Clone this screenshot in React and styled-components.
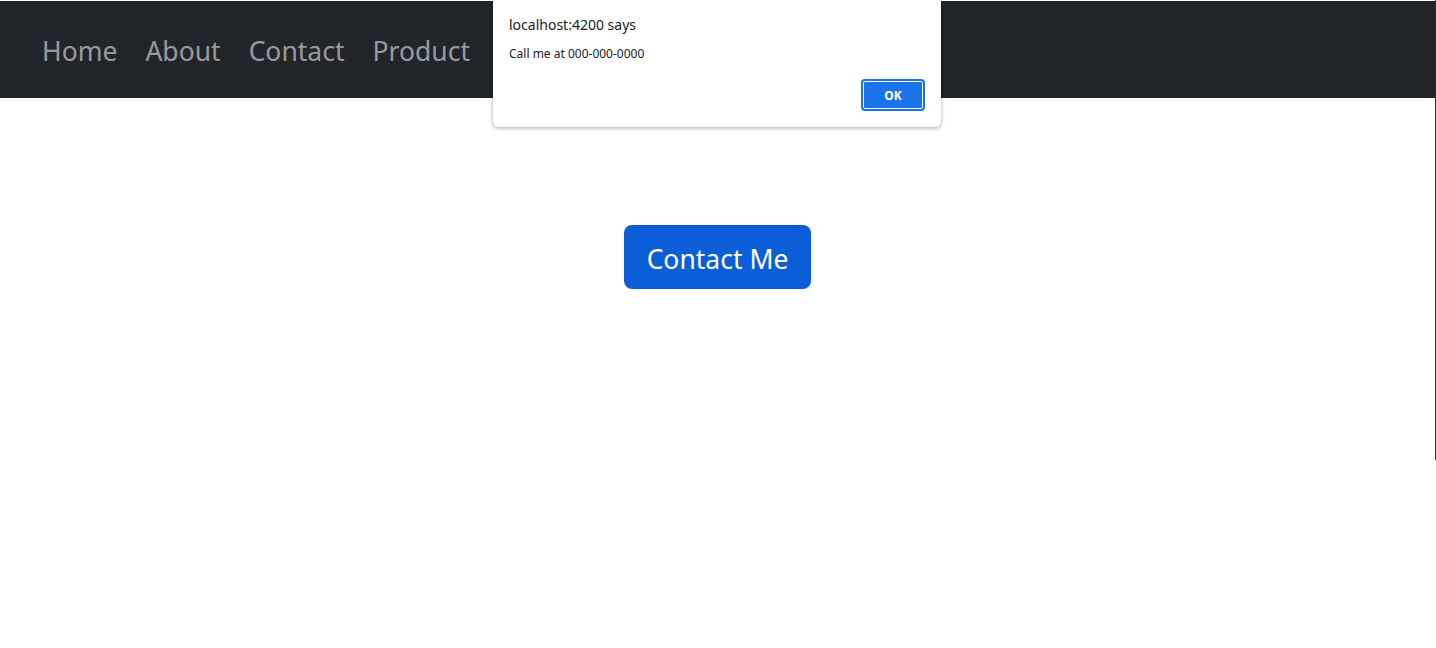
import React from 'react';
import styled, { createGlobalStyle } from 'styled-components';

const GlobalStyle = createGlobalStyle`
    html, body {
        margin: 0;
        padding: 0;
        background: #fff;
    }
    body {
        font-family: "Noto Sans", "Open Sans", sans-serif;
    }
`;

const Page = styled.div`
    position: relative;
    width: 1436px;
    height: 648px;
    overflow: hidden;
    background: #fff;
`;

const Frame = styled.div`
    height: 460px;
    padding-top: 1px;
    border-right: 1px solid #2b2b2b;
    box-sizing: border-box;
`;

const NavBar = styled.nav`
    display: flex;
    align-items: center;
    gap: 28px;
    height: 97px;
    padding-left: 42px;
    background: #212529;
`;

const NavLink = styled.a`
    font-size: 26.5px;
    color: rgba(255, 255, 255, 0.55);
    text-decoration: none;
    line-height: 1;
    padding-top: 3px;
`;

const Main = styled.main`
    display: flex;
    justify-content: center;
    padding-top: 127px;
`;

const ContactButton = styled.button`
    height: 64px;
    padding: 3px 23px 0;
    border: none;
    border-radius: 8px;
    background: #0b5ed7;
    color: #fff;
    font-family: inherit;
    font-size: 26.5px;
    cursor: pointer;
`;

const Dialog = styled.div`
    position: absolute;
    top: 0;
    left: 493px;
    width: 448px;
    height: 127px;
    box-sizing: border-box;
    padding: 15px 16px 0 16px;
    background: #fff;
    border-radius: 0 0 6px 6px;
    box-shadow: 0 1px 4px rgba(0, 0, 0, 0.35);
    display: flex;
    flex-direction: column;
`;

const DialogTitle = styled.div`
    font-size: 14px;
    color: #202124;
    line-height: 20px;
`;

const DialogMessage = styled.div`
    margin-top: 11px;
    font-size: 12px;
    color: #202124;
    line-height: 16px;
`;

const DialogActions = styled.div`
    display: flex;
    justify-content: flex-end;
    margin-top: 17px;
`;

const OkButton = styled.button`
    width: 64px;
    height: 32px;
    border: 2px solid #1a73e8;
    border-radius: 4px;
    background: #1a73e8;
    box-shadow: inset 0 0 0 1px #fff;
    color: #fff;
    font-family: inherit;
    font-size: 12px;
    font-weight: 700;
`;

const links = ['Home', 'About', 'Contact', 'Product'];

export default function App() {
    return (
        <Page>
            <GlobalStyle />
            <Frame>
                <NavBar>
                    {links.map(link =>
                        <NavLink key={link} href="#">{link}</NavLink>
                    )}
                </NavBar>
                <Main>
                    <ContactButton>Contact Me</ContactButton>
                </Main>
            </Frame>
            <Dialog>
                <DialogTitle>localhost:4200 says</DialogTitle>
                <DialogMessage>Call me at 000-000-0000</DialogMessage>
                <DialogActions>
                    <OkButton>OK</OkButton>
                </DialogActions>
            </Dialog>
        </Page>
    );
}
